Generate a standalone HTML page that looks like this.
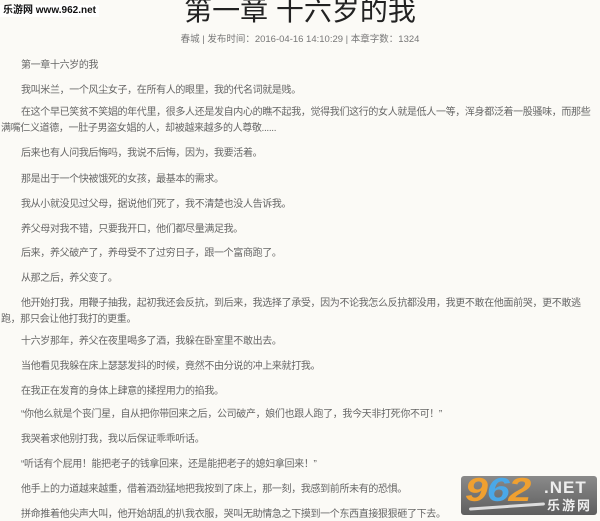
<!DOCTYPE html>
<html><head><meta charset="utf-8"><style>
html,body{margin:0;padding:0;width:600px;height:521px;overflow:hidden;background:#fbfaf6;}
body{position:relative;font-family:"Liberation Sans","Noto Sans CJK SC",sans-serif;}
.l{position:absolute;white-space:nowrap;font-size:10px;line-height:12px;color:#666;letter-spacing:-0.35px;}
.i{left:21px}.n{left:1px}
</style></head><body>
<div style="position:absolute;left:0;top:5px;background:#fff;font-size:10px;line-height:12px;font-weight:bold;color:#111;padding:0 3px;font-family:'Liberation Sans','Noto Sans CJK SC',sans-serif;">乐游网 www.962.net</div>
<div style="position:absolute;left:0;width:600px;text-align:center;top:-6px;font-size:28px;line-height:34px;color:#222;">第一章 十六岁的我</div>
<div style="position:absolute;left:0;width:600px;text-align:center;top:34px;font-size:9.5px;line-height:12px;color:#777;">春城 | 发布时间：2016-04-16 14:10:29 | 本章字数：1324</div>
<div class="l i" style="top:60px">第一章十六岁的我</div>
<div class="l i" style="top:85px">我叫米兰，一个风尘女子，在所有人的眼里，我的代名词就是贱。</div>
<div class="l i" style="top:107px">在这个早已笑贫不笑娼的年代里，很多人还是发自内心的瞧不起我，觉得我们这行的女人就是低人一等，浑身都泛着一股骚味，而那些</div>
<div class="l n" style="top:123px">满嘴仁义道德，一肚子男盗女娼的人，却被越来越多的人尊敬......</div>
<div class="l i" style="top:148px">后来也有人问我后悔吗，我说不后悔，因为，我要活着。</div>
<div class="l i" style="top:174px">那是出于一个快被饿死的女孩，最基本的需求。</div>
<div class="l i" style="top:199px">我从小就没见过父母，据说他们死了，我不清楚也没人告诉我。</div>
<div class="l i" style="top:224px">养父母对我不错，只要我开口，他们都尽量满足我。</div>
<div class="l i" style="top:248px">后来，养父破产了，养母受不了过穷日子，跟一个富商跑了。</div>
<div class="l i" style="top:273px">从那之后，养父变了。</div>
<div class="l i" style="top:298px">他开始打我，用鞭子抽我，起初我还会反抗，到后来，我选择了承受，因为不论我怎么反抗都没用，我更不敢在他面前哭，更不敢逃</div>
<div class="l n" style="top:314px">跑，那只会让他打我打的更重。</div>
<div class="l i" style="top:336px">十六岁那年，养父在夜里喝多了酒，我躲在卧室里不敢出去。</div>
<div class="l i" style="top:361px">当他看见我躲在床上瑟瑟发抖的时候，竟然不由分说的冲上来就打我。</div>
<div class="l i" style="top:386px">在我正在发育的身体上肆意的揉捏用力的掐我。</div>
<div class="l i" style="top:409px">“你他么就是个丧门星，自从把你带回来之后，公司破产，娘们也跟人跑了，我今天非打死你不可！”</div>
<div class="l i" style="top:434px">我哭着求他别打我，我以后保证乖乖听话。</div>
<div class="l i" style="top:459px">“听话有个屁用！能把老子的钱拿回来，还是能把老子的媳妇拿回来！”</div>
<div class="l i" style="top:484px">他手上的力道越来越重，借着酒劲猛地把我按到了床上，那一刻，我感到前所未有的恐惧。</div>
<div class="l i" style="top:509px">拼命推着他尖声大叫，他开始胡乱的扒我衣服，哭叫无助情急之下摸到一个东西直接狠狠砸了下去。</div>
<div style="position:absolute;left:461px;top:476px;width:136px;height:39px;border-radius:3px;background:linear-gradient(#8a8a8a,#5e5e5e);overflow:hidden;">
<div style="position:absolute;left:4px;top:-3px;font:italic bold 33px/34px 'Liberation Sans',sans-serif;color:#f0a030;letter-spacing:-1px;transform:scaleX(1.25);transform-origin:left;">9<span style="color:#4aa8e8">6</span>2</div>
<div style="position:absolute;left:83px;top:3px;font:bold 17px/18px 'Liberation Sans',sans-serif;color:#eee;letter-spacing:1px;">.NET</div>
<div style="position:absolute;left:86px;top:21px;font:bold 13px/15px 'Noto Sans CJK SC',sans-serif;color:#eee;letter-spacing:2px;">乐游网</div>
<div style="position:absolute;left:8px;top:29px;width:76px;height:3px;background:#ddd;border-radius:2px;transform:rotate(-4deg);"></div>
</div>
</body></html>
